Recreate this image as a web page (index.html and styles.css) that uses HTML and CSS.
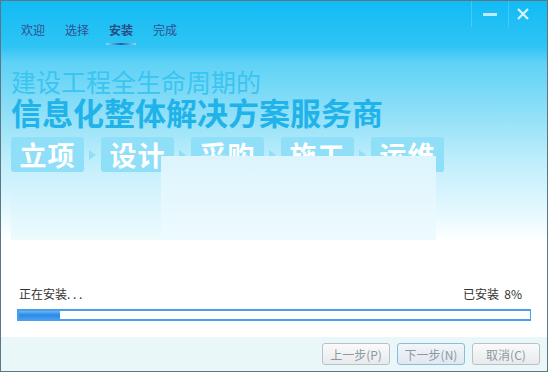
FILE: index.html
```html
<!DOCTYPE html>
<html lang="zh-CN">
<head>
    <meta charset="UTF-8">
    <title>安装</title>
    <link rel="stylesheet" href="styles.css">
</head>
<body>
    <div class="window">
        <div class="top">
            <div class="titlebar">
                <nav class="tabs">
                    <span class="tab">欢迎</span>
                    <span class="tab">选择</span>
                    <span class="tab active">安装</span>
                    <span class="tab">完成</span>
                </nav>
                <div class="controls">
                    <span class="ctl min"><i></i></span>
                    <span class="ctl close">
                        <svg width="14" height="14" viewBox="0 0 14 14"><path d="M2 2 L12 12 M12 2 L2 12" stroke="#d6f3fd" stroke-width="2.2" fill="none"/></svg>
                    </span>
                </div>
            </div>

            <div class="banner">
                <div class="slogan-1">建设工程全生命周期的</div>
                <div class="slogan-2">信息化整体解决方案服务商</div>
                <div class="steps">
                    <span class="step">立项</span>
                    <span class="arrow"></span>
                    <span class="step">设计</span>
                    <span class="arrow"></span>
                    <span class="step">采购</span>
                    <span class="arrow"></span>
                    <span class="step">施工</span>
                    <span class="arrow"></span>
                    <span class="step">运维</span>
                </div>
                <div class="veil veil-a"></div>
                <div class="veil veil-b"></div>
            </div>
        </div>

        <div class="content">
            <div class="status">
                <span>正在安装. . .</span>
                <span>已安装&nbsp;&nbsp;8%</span>
            </div>
            <div class="progress"><div class="fill" style="width: 8%"></div></div>
        </div>

        <div class="footer">
            <button class="btn">上一步(P)</button>
            <button class="btn focus">下一步(N)</button>
            <button class="btn">取消(C)</button>
        </div>
    </div>
</body>
</html>
```

FILE: styles.css
```css
body {
    margin: 0;
    background: #ffffff;
    font-family: "Noto Sans CJK SC", "DejaVu Sans", sans-serif;
}

.window {
    width: 546px;
    height: 370px;
    border: 1px solid #5d7684;
    display: flex;
    flex-direction: column;
    background: #ffffff;
    overflow: hidden;
}

.top {
    height: 240px;
    background: linear-gradient(to bottom, #12bbf5 0, #2ec4f4 45px, #5fd2f6 62px, #8ddff8 110px, #bfeefb 160px, #e4f8fe 210px, #ffffff 240px);
}

.titlebar {
    height: 58px;
    display: flex;
    justify-content: space-between;
}

.tabs {
    display: flex;
    gap: 20px;
    padding: 20px 0 0 20px;
}

.tab {
    position: relative;
    font-size: 12px;
    line-height: 18px;
    color: #32508e;
    height: 18px;
}

.tab.active {
    font-weight: bold;
    color: #2b4a86;
}

.tab.active::after {
    content: "";
    position: absolute;
    left: -3px;
    right: -3px;
    top: 22px;
    height: 2px;
    background: linear-gradient(to right, #8fd6f6, #1f5fa6 50%, #8fd6f6);
}

.controls {
    display: flex;
    padding-right: 10px;
}

.ctl {
    width: 36px;
    height: 26px;
    display: flex;
    align-items: center;
    justify-content: center;
}

.ctl.min {
    border-left: 1px solid rgba(255, 255, 255, 0.18);
    border-right: 1px solid rgba(255, 255, 255, 0.18);
}

.ctl.min i {
    width: 14px;
    height: 3px;
    background: #bdebfb;
}

.ctl.close {
    width: 28px;
    padding-bottom: 2px;
}

.banner {
    position: relative;
    padding-left: 10px;
    height: 182px;
}

.slogan-1 {
    font-size: 25px;
    line-height: 27px;
    color: #3ac5f1;
    margin-top: 9px;
}

.slogan-2 {
    font-size: 31px;
    line-height: 33px;
    font-weight: bold;
    color: #1fb3ea;
}

.steps {
    display: flex;
    align-items: center;
    margin-top: 9px;
}

.step {
    width: 73px;
    height: 35px;
    border-radius: 3px;
    background: #8fdff8;
    color: #ffffff;
    font-size: 27px;
    font-weight: bold;
    line-height: 35px;
    text-align: center;
    letter-spacing: 1px;
}

.arrow {
    width: 17px;
    display: flex;
    justify-content: center;
}

.arrow::before {
    content: "";
    border-left: 7px solid #8fdff8;
    border-top: 5px solid transparent;
    border-bottom: 5px solid transparent;
}

.veil {
    position: absolute;
    background: linear-gradient(to bottom, #dcf4fd, #eefbfe);
}

.veil-a {
    left: 160px;
    top: 88px;
    width: 275px;
    height: 84px;
}

.veil-b {
    left: 10px;
    top: 118px;
    width: 150px;
    height: 54px;
    background: linear-gradient(to bottom, #d2f2fc, #edfbfe);
}

.content {
    flex: 1;
    padding: 44px 16px 0 16px;
}

.status {
    display: flex;
    justify-content: space-between;
    font-size: 12px;
    line-height: 18px;
    color: #333333;
    padding: 0 9px 0 2px;
}

.progress {
    margin-top: 6px;
    height: 8px;
    border: 2px solid #4a9fe8;
    border-width: 2px 1px 2px 2px;
    background: #ffffff;
}

.fill {
    height: 100%;
    background: linear-gradient(to bottom, #6ab8f4, #2a8ae8 50%, #3f9cf0);
}

.footer {
    height: 34px;
    background: #e9f7f9;
    display: flex;
    justify-content: flex-end;
    align-items: center;
    gap: 7px;
    padding-right: 7px;
}

.btn {
    width: 68px;
    height: 22px;
    border: 1px solid #b8c2c8;
    border-radius: 3px;
    background: linear-gradient(to bottom, #fafafa, #e7eaec);
    color: #8c98a2;
    font-family: "Noto Sans CJK SC", "DejaVu Sans", sans-serif;
    font-size: 12px;
    padding: 0;
}

.btn.focus {
    border-color: #86bde2;
    background: linear-gradient(to bottom, #f2f6fa, #e0e7f0);
}
```
